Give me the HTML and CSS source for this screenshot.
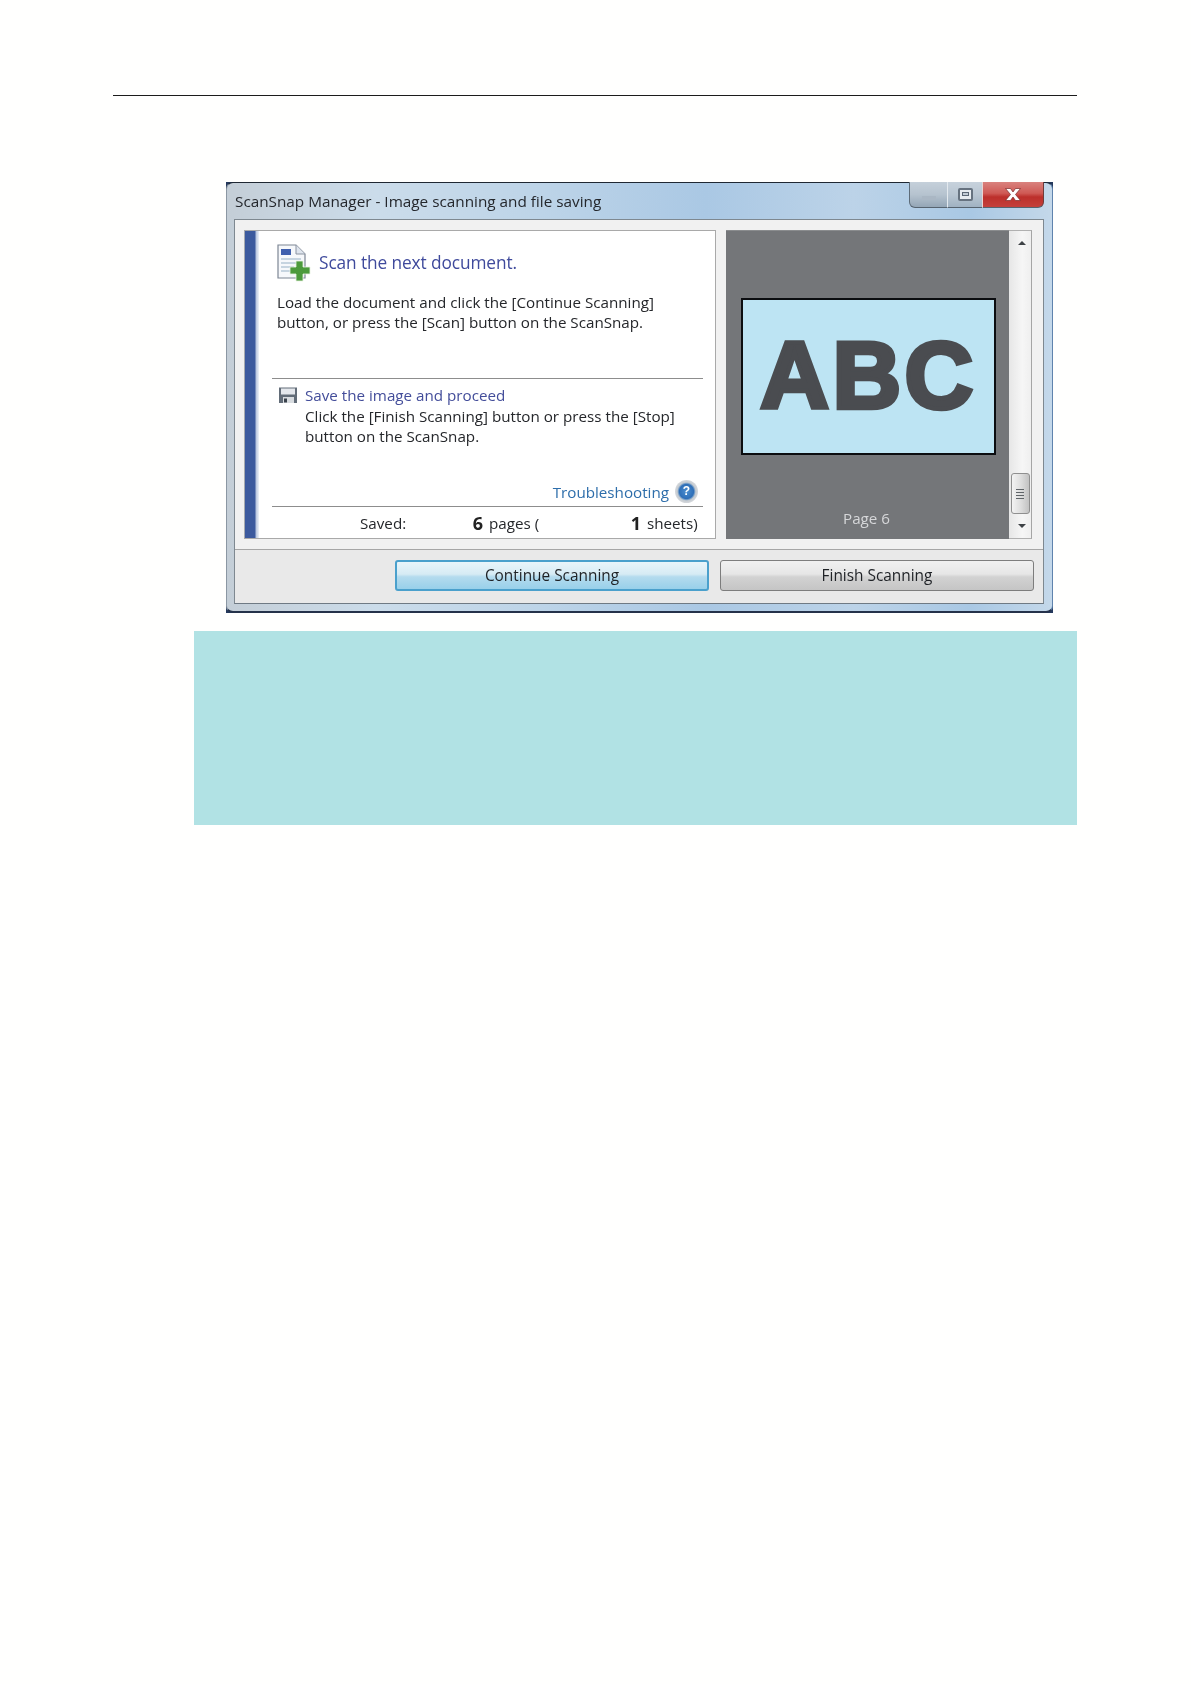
FILE: index.html
```html
<!DOCTYPE html>
<html lang="en">
<head>
<meta charset="utf-8">
<title>ScanSnap Manager</title>
<link rel="stylesheet" href="styles.css">
</head>
<body>
<div class="page">
  <div class="rule"></div>
  <div class="win">
    <div class="frame">
      <div class="titlebar">
        <span class="caption">ScanSnap Manager - Image scanning and file saving</span>
        <div class="winbtns">
          <div class="wb wb-min"><span class="min-glyph"></span></div>
          <div class="wb wb-max"><span class="max-glyph"><span class="max-slit"></span></span></div>
          <div class="wb wb-close">
            <svg width="20" height="15" viewBox="0 0 20 15"><path d="M2.500 1.500h5l2.500 3.500 2.500-3.500h5l-5 6 5 6h-5l-2.500-3.500-2.500 3.500h-5l5-6z" fill="#fff" stroke="#7a2a28" stroke-width=".7"/></svg>
          </div>
        </div>
      </div>
      <div class="client">
        <div class="top">
          <div class="panel">
            <div class="band"></div>
            <div class="main">
              <div class="sec-next">
                <div class="head">
                  <svg class="doc-ico" width="34" height="38" viewBox="0 0 34 38">
                    <path d="M1 1h18l9 9v24H1z" fill="#f6f8fb" stroke="#7d8694" stroke-width="1.2"/>
                    <path d="M19 1v9h9" fill="#dfe5ee" stroke="#8b94a2" stroke-width="1"/>
                    <rect x="4" y="5" width="10" height="6" fill="#3f5fae"/>
                    <path d="M4 15h20M4 19h20M4 23h13M4 27h11" stroke="#b6c8d8" stroke-width="1.6"/>
                    <path d="M19 17h7v6h7v7h-7v7h-7v-7h-6v-7h6z" fill="#4c9a3c" stroke="#e8f2e2" stroke-width=".8"/>
                  </svg>
                  <span class="head-text">Scan the next document.</span>
                </div>
                <p class="copy">Load the document and click the [Continue Scanning]<br>button, or press the [Scan] button on the ScanSnap.</p>
              </div>
              <div class="sec-save">
                <div class="save-row">
                  <svg class="floppy" width="20" height="18" viewBox="0 0 20 18">
                    <path d="M1 1.500h18v15.500H1z" fill="#626c78"/>
                    <rect x="3" y="2.500" width="14" height="6" fill="#e4e7ec"/>
                    <rect x="5" y="11" width="11" height="6" fill="#d8dce0"/>
                    <rect x="6" y="12.500" width="3" height="4" fill="#3a424c"/>
                  </svg>
                  <div class="save-text">
                    <div class="save-title">Save the image and proceed</div>
                    <p class="copy">Click the [Finish Scanning] button or press the [Stop]<br>button on the ScanSnap.</p>
                  </div>
                </div>
                <div class="trouble">
                  <span class="trouble-link">Troubleshooting</span>
                  <span class="help">?</span>
                </div>
              </div>
              <div class="saved">
                <span class="saved-label">Saved:</span>
                <b class="num">6</b>
                <span class="unit">pages (</span>
                <b class="num">1</b>
                <span class="unit">sheets)</span>
              </div>
            </div>
          </div>
          <div class="preview">
            <div class="sheet"><span class="abc">ABC</span></div>
            <div class="pageno">Page 6</div>
          </div>
          <div class="scroll">
            <span class="arrow arrow-up"></span>
            <div class="thumb"><span class="grip"></span></div>
            <span class="arrow arrow-down"></span>
          </div>
        </div>
        <div class="foot">
          <div class="btn btn-primary">Continue Scanning</div>
          <div class="btn btn-plain">Finish Scanning</div>
        </div>
      </div>
    </div>
  </div>
  <div class="note"></div>
</div>
</body>
</html>
```
FILE: styles.css
```css
* { box-sizing: border-box; }
html, body { margin: 0; padding: 0; background: #fffffe; }
body { font-family: "Open Sans", "Noto Sans", sans-serif; color: #25272b; }
.page { width: 1191px; height: 1684px; padding: 95px 114px 0 113px; overflow: hidden; }
.rule { height: 1px; background: #1c1c1c; margin-bottom: .5px; }

.win {
  margin: 85.5px 24px 0 113px;
  height: 431px;
  background: #24385c;
}
.frame {
  height: 100%;
  border-radius: 7px;
  border-top: 1.5px solid #1f2833;
  border-left: 1px solid #8b97a3;
  border-right: 1px solid #5f83ad;
  border-bottom: 2px solid #25324a;
  background:
    linear-gradient(90deg, #c4ced7 0, #cbdcea 18%, #bdd4e8 38%, #aac8e4 58%, #bcd3e8 76%, #a9c8e4 90%, #c4d8ea 100%);
  display: flex;
  flex-direction: column;
  filter: blur(.35px);
}
.titlebar {
  height: 36.5px;
  flex: none;
  padding: 0 8px 0 8px;
  display: flex;
  justify-content: space-between;
  align-items: flex-start;
}
.caption { font-size: 15.300px; line-height: 20px; margin-top: 8px; color: #24272c; }
.winbtns { display: flex; height: 26px; margin-top: -1px; }
.wb { display: flex; align-items: center; justify-content: center; border-bottom: 1px solid #56636f; }
.wb-min {
  width: 38px;
  border-left: 1px solid #5d6b78;
  border-radius: 0 0 0 6px;
  background: linear-gradient(180deg, #c5d0da 0, #b6c3cf 50%, #94a6b6 100%);
  padding-top: 7px;
}
.min-glyph { width: 14px; height: 4px; background: #aab7c4; }
.wb-max {
  width: 35px;
  border-left: 1px solid #e3e9ee;
  background: linear-gradient(180deg, #c7d2dc 0, #b9c6d2 50%, #a0b2c2 100%);
  align-items: flex-start;
  padding-top: 6px;
}
.max-glyph { width: 15px; height: 13px; border: 2px solid #66727f; border-radius: 2px; background: #e6ebf0; display: flex; align-items: center; justify-content: center; }
.max-slit { width: 7px; height: 4px; border: 1px solid #5a6674; background: #c2ccd6; }
.wb-close {
  width: 62px;
  border-left: 1px solid #e9d4d2;
  border-right: 1px solid #6e3b3a;
  border-radius: 0 0 6px 0;
  background: linear-gradient(180deg, #d9827e 0, #cf5a55 45%, #bc2f2b 60%, #c4403b 100%);
}

.client {
  margin: 0 8px 7px 7px;
  flex: 1;
  border: 1px solid #7e8890;
  border-bottom-color: #6f7a84;
  background: #f1f1f1;
  display: flex;
  flex-direction: column;
}
.top { display: flex; padding: 10px 11px 0 9px; height: 329px; flex: none; }
.panel {
  width: 472px;
  height: 309px;
  background: #fff;
  border: 1px solid #a9a9a9;
  border-left-color: #a6aab0;
  display: flex;
  margin-right: 10px;
}
.band {
  width: 14px;
  flex: none;
  background: linear-gradient(90deg, #3c5a9e 0, #3c5a9e 72%, #b6c4de 78%, #eef2f8 100%);
}
.main { flex: 1; padding-left: 13px; padding-right: 12px; display: flex; flex-direction: column; min-width: 0; }
.sec-next { height: 148px; padding: 13px 0 0 5px; border-bottom: 1px solid #8d8d8d; flex: none; }
.head { display: flex; align-items: center; gap: 8px; height: 37px; }
.doc-ico { flex: none; }
.head-text { font-size: 17.300px; color: #3f4a9c; line-height: 24px; letter-spacing: -.1px; }
.copy { margin: 0; font-size: 15.200px; line-height: 20px; color: #25272b; }
.sec-next .copy { margin-top: 11px; }
.sec-save { height: 128px; flex: none; display: flex; flex-direction: column; border-bottom: 1px solid #8d8d8d; }
.save-row { display: flex; padding: 6px 0 0 6px; gap: 7px; }
.floppy { flex: none; margin-top: 1px; }
.save-title { font-size: 15.200px; line-height: 20px; color: #434d9a; margin-bottom: 1px; }
.trouble { margin-top: auto; display: flex; justify-content: flex-end; align-items: center; gap: 6px; padding: 0 5px 4px 0; height: 25px; }
.trouble-link { font-size: 15.200px; color: #2e6eab; line-height: 20px; }
.help {
  width: 23px;
  height: 23px;
  border-radius: 50%;
  background: radial-gradient(circle closest-side at 50% 50%, #4c8fd0 0, #2f6fb8 62%, #7fa3c8 72%, #c4cad0 80%, #d5d8dc 100%);
  color: #fff;
  font-family: "Liberation Sans", sans-serif;
  font-weight: 700;
  font-size: 12px;
  line-height: 23px;
  text-align: center;
}
.saved {
  flex: 1;
  display: grid;
  grid-template-columns: 105px 18px 140px 18px auto;
  padding: 0 0 0 88px;
  align-items: center;
  font-size: 15.200px;
}
.num { text-align: right; font-size: 18px; font-weight: 700; color: #222; }
.unit { padding-left: 6px; }

.preview { width: 283px; height: 309px; background: #747679; border-top: 1px solid #8a8c8e; padding: 67px 0 0 15px; }
.sheet {
  width: 255px;
  height: 157px;
  background: #bde4f3;
  border: 2px solid #0b0d10;
  display: flex;
  align-items: center;
  justify-content: center;
}
.abc {
  font-family: "Liberation Sans", Arial, sans-serif;
  font-weight: 700;
  font-size: 95px;
  line-height: 100px;
  letter-spacing: 3.500px;
  color: #4a4c50;
  -webkit-text-stroke: 4.500px #4a4c50;
  margin-top: -3px;
}
.pageno { margin: 53px 0 0 102px; font-size: 15.200px; line-height: 20px; color: #d6d7d9; }

.scroll {
  width: 23px;
  height: 309px;
  background: linear-gradient(90deg, #e6e6e6, #f6f6f6 60%, #efefef);
  border-top: 1px solid #b0b0b0;
  border-right: 1px solid #a5a5a5;
  border-bottom: 1px solid #b0b0b0;
  display: flex;
  flex-direction: column;
  align-items: center;
  padding: 10px 0;
}
.arrow { width: 0; height: 0; border-left: 4.500px solid transparent; border-right: 4.500px solid transparent; margin-left: 3px; }
.arrow-up { border-bottom: 4.500px solid #3e4246; }
.arrow-down { border-top: 4.500px solid #3e4246; margin-top: 10px; }
.thumb {
  margin-top: auto;
  width: 19px;
  height: 41px;
  border: 1px solid #8f8f8f;
  border-radius: 3px;
  background: linear-gradient(90deg, #f3f3f3, #dcdcdc 55%, #c2c2c2);
  display: flex;
  align-items: center;
  justify-content: center;
}
.grip { width: 8px; height: 10px; background: repeating-linear-gradient(180deg, #5f6468 0, #5f6468 1px, transparent 1px, transparent 3px); }

.foot {
  flex: 1;
  border-top: 1px solid #a6a6a6;
  background: #e9e9e9;
  padding: 10px 9px 0 0;
  display: flex;
  justify-content: flex-end;
  align-items: flex-start;
  gap: 11px;
}
.btn { height: 31px; border-radius: 3px; display: flex; align-items: center; justify-content: center; font-size: 15.400px; color: #1f2226; }
.btn-primary {
  width: 314px;
  border: 2px solid #4aa0cc;
  background: linear-gradient(180deg, #e9f5fa 0, #d6ebf4 45%, #b4dbee 55%, #98d0ea 100%);
}
.btn-plain {
  width: 314px;
  border: 1px solid #7d7d7d;
  background: linear-gradient(180deg, #f0f0f0 0, #e6e6e6 45%, #d2d2d2 55%, #c5c5c5 100%);
}

.note { margin: 18px 0 0 81px; height: 194px; background: #b1e2e4; }
```
